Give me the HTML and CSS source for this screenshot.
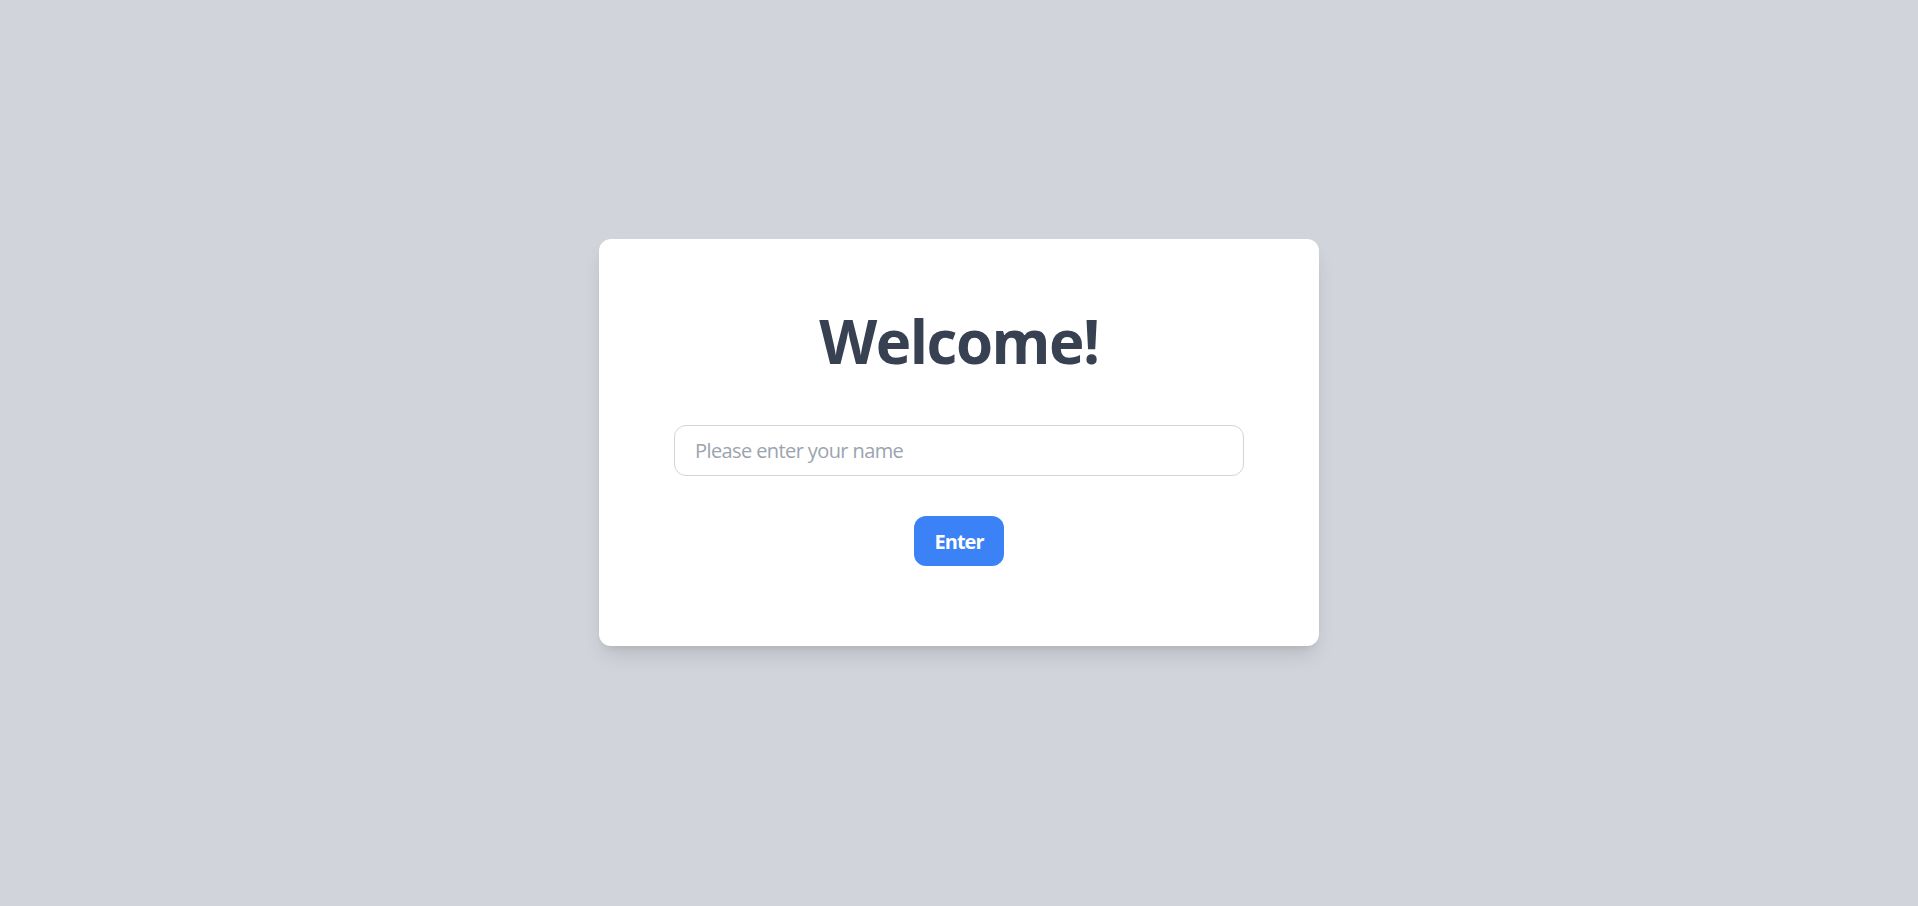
FILE: index.html
```html
<!DOCTYPE html>
<html lang="en">
<head>
<meta charset="utf-8">
<title>Welcome</title>
<link rel="stylesheet" href="styles.css">
</head>
<body>
<main class="page">
  <section class="card">
    <h1 class="title">Welcome!</h1>
    <input class="name-input" type="text" placeholder="Please enter your name">
    <button class="enter-btn" type="button">Enter</button>
  </section>
</main>
</body>
</html>
```

FILE: styles.css
```css
html, body {
  margin: 0;
  padding: 0;
}

body {
  background: #d1d5db;
  font-family: "Open Sans", "Noto Sans", "Liberation Sans", sans-serif;
}

.page {
  box-sizing: border-box;
  min-height: 100vh;
  display: flex;
  align-items: center;
  justify-content: center;
  padding-bottom: 22px;
}

.card {
  box-sizing: border-box;
  width: 720px;
  background: #ffffff;
  border-radius: 12px;
  box-shadow: 0 12px 20px -4px rgba(0, 0, 0, 0.12), 0 5px 8px -5px rgba(0, 0, 0, 0.1);
  padding: 72px 75px 80px;
  display: flex;
  flex-direction: column;
  align-items: center;
}

.title {
  margin: 0 0 54px;
  font-size: 60px;
  line-height: 60px;
  font-weight: 700;
  color: #374151;
  letter-spacing: -1.5px;
}

.name-input {
  box-sizing: border-box;
  width: 570px;
  height: 51px;
  margin: 0 0 40px;
  padding: 0 20px;
  border: 1px solid #d1d5db;
  border-radius: 12px;
  font-family: inherit;
  font-size: 20px;
  line-height: 30px;
  letter-spacing: -0.6px;
  color: #374151;
  background: #ffffff;
  outline: none;
}

.name-input::placeholder {
  color: #9ca3af;
}

.enter-btn {
  box-sizing: border-box;
  height: 50px;
  width: 90px;
  padding: 2px 0 0;
  border: none;
  border-radius: 12px;
  background: #3b82f6;
  color: #ffffff;
  font-family: inherit;
  font-size: 20px;
  line-height: 30px;
  font-weight: 700;
  letter-spacing: -1px;
  cursor: pointer;
}
```
